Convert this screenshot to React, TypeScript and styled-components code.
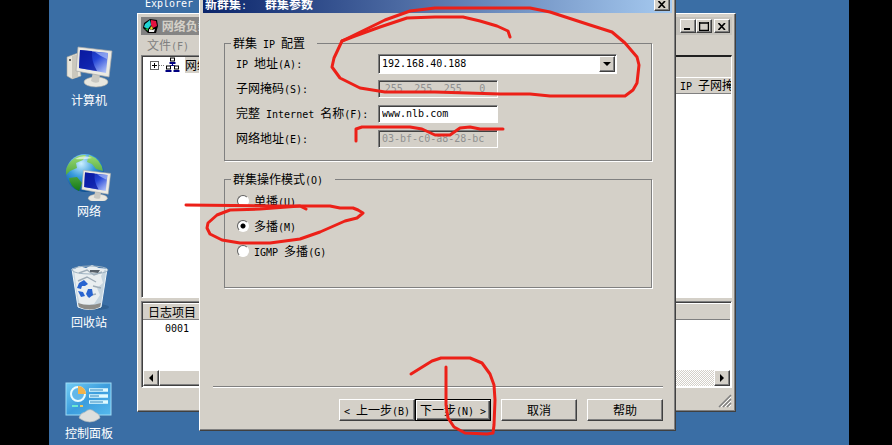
import React from "react";
import styled, { createGlobalStyle, css } from "styled-components";

const face = "#d4d0c8";
const latinFont = `"DejaVu Sans Mono", "Liberation Mono", monospace`;
const hanFont = `"Noto Sans CJK SC", "Noto Sans", sans-serif`;

const GlobalStyle = createGlobalStyle`
  * { box-sizing: border-box; }
  html, body { margin: 0; background: #000; overflow: hidden; }
  body { font: 12px/16px ${hanFont}; color: #000; }
`;

const raised = css`
  border: 1px solid;
  border-color: #fff #404040 #404040 #fff;
  box-shadow: inset -1px -1px 0 #808080;
  background: ${face};
`;

const sunken = css`
  border: 1px solid;
  border-color: #808080 #fff #fff #808080;
  box-shadow: inset 1px 1px 0 #404040;
`;

const Screen = styled.main`
  position: relative;
  height: 100vh;
  padding: 0 43px 0 49px;
  overflow: hidden;
`;

const Desktop = styled.div`
  position: relative;
  height: 100%;
  background: #3a6ea5;
  display: flex;
  align-items: flex-start;
  overflow: hidden;
`;

const IconColumn = styled.nav<{ $raised?: boolean }>`
  width: 80px;
  flex: none;
  display: grid;
  gap: 46px;
  margin-top: ${(p) => (p.$raised ? "-6px" : "43px")};
`;

const Shortcut = styled.a`
  display: grid;
  justify-items: center;
  height: 65px;
  color: #fff;
  text-decoration: none;
  line-height: 16px;
  grid-template-rows: 49px 16px;
`;

const ShortcutCaption = styled.a`
  color: #fff;
  text-align: center;
  text-decoration: none;
`;

const Latin = styled.span`
  font: 10px/12px ${latinFont};
  white-space: pre;
`;

/* Sets half-width runs in the narrow face, so that two of them fill one Han cell. */
const Mixed = ({ children }: { children: string }) => (
  <>
    {children.split(/([\x20-\x7e]+)/).map((run, i) =>
      i % 2 ? <Latin key={i}>{run}</Latin> : run
    )}
  </>
);

const Frame = styled.section`
  position: absolute;
  ${raised}
  padding: 3px;
  display: flex;
  flex-direction: column;
`;

const ManagerFrame = styled(Frame)`
  left: 88px;
  right: 113px;
  top: 13px;
`;

const DialogFrame = styled(Frame)`
  left: 150px;
  right: 173px;
  top: -9px;
`;

const TitleBar = styled.header<{ $active?: boolean }>`
  height: 18px;
  display: flex;
  align-items: center;
  padding: 0 2px;
  color: ${(p) => (p.$active ? "#fff" : face)};
  background: ${(p) =>
    p.$active
      ? "linear-gradient(90deg, #0a246a, #a6caf0)"
      : "linear-gradient(90deg, #808080, #c8c5be)"};
  font-weight: 700;
  white-space: pre;
`;

const TitleText = styled.h1`
  flex: 1;
  margin: 0;
  font: inherit;
`;

const CaptionButtons = styled.div`
  display: flex;
  button:last-child { margin-left: 2px; }
`;

const CaptionButton = styled.button`
  ${raised}
  width: 16px;
  height: 14px;
  padding: 0;
  display: grid;
  place-items: center;
`;

const MenuBar = styled.div`
  height: 20px;
  padding: 1px 6px;
  display: flex;
`;

const MenuButton = styled.button`
  border: 0;
  padding: 0;
  background: none;
  color: #808080;
  font: 12px/16px ${hanFont};
`;

const Panes = styled.div`
  display: grid;
  grid-template-columns: 1fr 1fr;
  height: 243px;
`;

const TreePane = styled.div`
  ${sunken}
  background: #fff;
  padding: 1px 8px;
`;

const TreeRow = styled.div`
  display: flex;
  align-items: center;
  gap: 4px;
  white-space: nowrap;
  overflow: hidden;
  span { background: ${face}; }
`;

const ListPane = styled.div`
  border-top: 2px solid #202020;
  border-right: 1px solid #fff;
  border-bottom: 1px solid #fff;
  background: #fff;
`;

const ListBanner = styled.div`
  height: 20px;
  background: ${face};
`;

const Table = styled.table`
  width: 100%;
  border-collapse: collapse;
  table-layout: fixed;
  th {
    height: 16px;
    padding: 0 0 0 5px;
    text-align: left;
    font-weight: 400;
    line-height: 14px;
    white-space: nowrap;
    overflow: hidden;
    background: ${face};
    border-top: 1px solid #fff;
    border-bottom: 1px solid #808080;
  }
  td { padding: 0 0 0 22px; line-height: 14px; }
`;

const SpacerHead = styled.th`
  width: 81%;
`;

const LogPane = styled.div`
  ${sunken}
  margin-top: 3px;
  padding: 1px;
  background: #fff;
  display: flex;
  flex-direction: column;
  height: 87px;
`;

const ScrollBar = styled.div`
  margin-top: auto;
  display: flex;
  height: 16px;
  background: repeating-conic-gradient(#fff 0 25%, ${face} 0 50%) 0 0 / 2px 2px;
`;

const ScrollButton = styled(CaptionButton)`
  height: 16px;
`;

const ScrollThumb = styled.div`
  ${raised}
  width: 60%;
  margin-right: auto;
`;

const StatusBar = styled.footer`
  height: 20px;
  display: flex;
  justify-content: flex-end;
  align-items: flex-end;
`;

const DialogBody = styled.form`
  padding: 22px 9px 6px 10px;
  display: flex;
  flex-direction: column;
`;

const Group = styled.fieldset`
  margin: 0 11px 10px;
  min-width: 0;
  border: 1px solid #808080;
  box-shadow: 1px 1px 0 #fff;
  padding: 0 0 9px 11px;
`;

const Legend = styled.legend`
  margin-left: -5px;
  padding: 0 12px 0 2px;
  line-height: 16px;
`;

const FieldGrid = styled.div`
  display: grid;
  grid-template-columns: 142px minmax(0, 239px);
  grid-auto-rows: 25px;
  align-items: center;
`;

const FieldLabel = styled.label`
  padding-bottom: 2px;
`;

const Field = styled.input`
  ${sunken}
  width: 120px;
  height: 18px;
  padding: 0 3px;
  border-radius: 0;
  background: #fff;
  color: #000;
  font: 10px/14px ${latinFont};
  &:disabled { background: ${face}; color: #909090; }
`;

const Octets = styled.div`
  ${sunken}
  width: 120px;
  height: 18px;
  display: grid;
  grid-template-columns: repeat(4, 1fr);
`;

const Octet = styled.input`
  min-width: 0;
  border: 0;
  padding: 0;
  background: none;
  text-align: center;
  color: #909090;
  font: 10px/14px ${latinFont};
`;

const ComboBox = styled.div`
  position: relative;
`;

const Select = styled.select`
  ${sunken}
  appearance: none;
  display: block;
  width: 100%;
  height: 20px;
  padding: 0 20px 0 3px;
  border-radius: 0;
  background: #fff;
  color: #000;
  font: 10px/16px ${latinFont};
`;

const ComboArrow = styled.span`
  ${raised}
  position: absolute;
  right: 2px;
  top: 2px;
  width: 16px;
  height: 16px;
  display: grid;
  place-items: center;
  pointer-events: none;
`;

const RadioList = styled.div`
  display: grid;
  grid-auto-rows: 25px;
  padding: 1px 0 15px;
`;

const RadioLabel = styled.label`
  display: flex;
  align-items: center;
  gap: 5px;
`;

const Radio = styled.input`
  appearance: none;
  margin: 0 0 0 1px;
  width: 12px;
  height: 12px;
  border-radius: 50%;
  border: 1px solid;
  border-color: #606060 #fff #fff #606060;
  background: #fff;
  &:checked { background: radial-gradient(circle, #000 0 2px, #fff 3px); }
`;

const Divider = styled.hr`
  width: 100%;
  height: 2px;
  margin: 88px 0 11px;
  border: 0;
  border-top: 1px solid #808080;
  border-bottom: 1px solid #fff;
`;

const Actions = styled.div`
  display: flex;
  justify-content: flex-end;
  gap: 10px;
`;

const StepPair = styled.div`
  display: flex;
`;

const PushButton = styled.button<{ $default?: boolean }>`
  ${raised}
  width: 76px;
  height: 22px;
  padding: 0;
  font: 12px/16px ${hanFont};
  color: #000;
  white-space: nowrap;
  ${(p) =>
    p.$default &&
    css`
      border-color: #000;
      box-shadow: inset 1px 1px 0 #fff, inset -1px -1px 0 #404040, inset -2px -2px 0 #808080;
    `}
`;

const Ink = styled.svg`
  position: absolute;
  left: 0;
  top: 0;
  pointer-events: none;
  fill: none;
  stroke: #ec2018;
  stroke-width: 3;
  stroke-linecap: round;
  stroke-linejoin: round;
`;

const Cross = () => (
  <svg width="8" height="7" viewBox="0 0 8 7">
    <path d="M0.5 0L7 7M7 0L0.5 7" stroke="#000" strokeWidth="1.6" />
  </svg>
);

const Triangle = ({ to }: { to: "left" | "right" | "down" }) => (
  <svg width="8" height="8" viewBox="0 0 8 8">
    <path d={{ left: "M6 0V8L2 4Z", right: "M2 0V8L6 4Z", down: "M0 2H8L4 6Z" }[to]} />
  </svg>
);

const Monitor = () => (
  <g>
    <ellipse cx="31" cy="39" rx="12" ry="5" fill="#e9e7df" stroke="#aaa9a3" strokeWidth=".6" />
    <path d="M28 29L35 31L34 39Q30 41 26 38Z" fill="#c9c8c2" />
    <path d="M13 4L47 8L44 34L11 28Z" fill="#eceae2" stroke="#a6a8a8" strokeWidth=".7" />
    <path d="M15 7L43 10L41 30L14 25Z" fill="url(#panel)" />
    <path d="M15 7L27 8Q26 18 32 28L14 25Z" fill="#0818a0" opacity=".75" />
    <path d="M30 9L43 10L42 16Q35 13 30 9Z" fill="#a8bcf8" opacity=".7" />
  </g>
);

const ComputerIcon = () => (
  <svg width="48" height="47" viewBox="0 0 48 47">
    <defs>
      <linearGradient id="panel" x1="0" y1="0" x2="1" y2="1">
        <stop offset="0" stopColor="#0c1c98" />
        <stop offset=".5" stopColor="#2647d8" />
        <stop offset="1" stopColor="#c3d2fc" />
      </linearGradient>
    </defs>
    <path d="M2 14L13 10L16 33L7 36L2 33Z" fill="#e8e5da" stroke="#aaa69a" strokeWidth=".6" />
    <path d="M7 13L13 11V34L7 36Z" fill="#cbc8bd" />
    <circle cx="5" cy="17" r="1" fill="#333" />
    <Monitor />
  </svg>
);

const NetworkIcon = () => (
  <svg width="48" height="47" viewBox="0 0 48 47">
    <defs>
      <radialGradient id="sea" cx=".4" cy=".25" r=".8">
        <stop offset="0" stopColor="#cdf0ff" />
        <stop offset=".45" stopColor="#389bdc" />
        <stop offset="1" stopColor="#064487" />
      </radialGradient>
      <linearGradient id="land" x1="0" y1="0" x2="0" y2="1">
        <stop offset="0" stopColor="#9bdc72" />
        <stop offset="1" stopColor="#137a16" />
      </linearGradient>
    </defs>
    <circle cx="20" cy="19" r="19" fill="url(#sea)" />
    <path d="M6 7Q13 0 21 1L18 6L11 9L12 14L5 17L1 21Q0 13 6 7ZM24 1Q36 5 38 17L31 15L27 10L22 8ZM4 24L12 23L17 29L14 37Q5 33 4 24Z" fill="url(#land)" />
    <path d="M10 5Q18 0 27 4Q18 6 10 5Z" fill="#fff" opacity=".6" />
    <g transform="translate(8 13) scale(.8 .8)"><Monitor /></g>
  </svg>
);

const BinIcon = () => (
  <svg width="48" height="47" viewBox="0 0 48 47">
    <ellipse cx="31" cy="42" rx="13" ry="3" fill="#24517f" opacity=".5" />
    <path d="M7 4L42 4L36 42Q24 47 13 42Z" fill="#c6d5df" stroke="#edf5fa" />
    <path d="M9 5L14 1L21 3L27 0L34 3L40 4L36 11L38 18L32 23L35 30L29 39L15 40L12 27Z" fill="#e9eef0" />
    <path d="M14 8L22 5L29 10L37 7M13 16L22 12L31 17M28 21L36 23M22 31L31 29" fill="none" stroke="#9fadb8" strokeWidth="1.4" />
    <ellipse cx="25" cy="5" rx="18" ry="4" fill="none" stroke="#9fb3c2" />
    <path d="M25 5H35L33 8L25 7Z" fill="#555f68" />
    <path d="M14 18L19 15L23 19L20 21L17 21L16 24L12 23ZM23 24L27 24L28 30L24 33L21 29ZM13 26L18 27L20 31L16 32Z" fill="#2864d0" />
    <path d="M13 38Q24 42 36 38L35 42Q25 47 14 42Z" fill="#8d8c88" />
  </svg>
);

const ControlPanelIcon = () => (
  <svg width="48" height="47" viewBox="0 0 48 47">
    <defs>
      <linearGradient id="board" x1="0" y1="0" x2="1" y2="1">
        <stop offset="0" stopColor="#72cdf5" />
        <stop offset=".5" stopColor="#3c9ddd" />
        <stop offset="1" stopColor="#55b9ee" />
      </linearGradient>
    </defs>
    <rect x="1" y="7" width="45" height="32" fill="url(#board)" stroke="#9edcf6" />
    <circle cx="13" cy="18" r="7" fill="#61b7e9" stroke="#e8fbff" strokeWidth="2" />
    <path d="M13 18V10A8 8 0 0 1 21 18Z" fill="#f2b34b" />
    <path d="M24 14H43M24 20H43M24 26H43" stroke="#dffaff" strokeWidth="3.5" />
    <path d="M25 14H38M25 20H34M25 26H38" stroke="#2780bd" strokeWidth="1.2" />
    <path d="M7 30H13" stroke="#6de8d0" strokeWidth="2" />
    <path d="M15 30H18" stroke="#f0c859" strokeWidth="2" />
    <path d="M14 42Q15 37 20 36Q25 31 30 36Q35 38 35 42Q25 50 14 42Z" fill="#dedfdd" stroke="#a6b3ba" strokeWidth=".7" />
  </svg>
);

const ClusterLogo = () => (
  <svg width="16" height="16" viewBox="0 0 16 16">
    <path d="M1 5L7 1L14 2L15 8L13 15L5 15L0 10Z" />
    <path d="M2 6L7 2L8 7L5 11L1 9Z" fill="#20d4d4" />
    <path d="M8 2L13 3L14 8L10 10L8 7Z" fill="#e3123f" />
    <path d="M8 8L10 10L9 12L7 11Z" fill="#e3d72b" />
    <path d="M6 11L9 12L12 11L11 14H6Z" fill="#eee" />
    <path d="M2 11L5 10V13Z" fill="#1faf37" />
  </svg>
);

const ClusterNode = ({ x, y }: { x: number; y: number }) => (
  <g transform={`translate(${x} ${y})`}>
    <rect x="1" width="4" height="3" fill="#fff" stroke="#000" />
    <path d="M0 5H6" stroke="#000080" strokeWidth="2" />
  </g>
);

const TreeIcon = () => (
  <svg width="31" height="16" viewBox="0 0 31 16">
    <rect x=".5" y="4.5" width="8" height="8" fill="#fff" stroke="#666" />
    <path d="M2 8.5H7M4.5 6V11" stroke="#000" />
    <path d="M9 8.5H15" stroke="#777" strokeDasharray="1 1" />
    <path d="M22.5 7V9M18 10L22.5 8L27 10" stroke="#000080" fill="none" />
    <ClusterNode x={19.5} y={1} />
    <ClusterNode x={15.5} y={9} />
    <ClusterNode x={23.5} y={9} />
  </svg>
);

const shortcuts = [
  { name: "计算机", Icon: ComputerIcon },
  { name: "网络", Icon: NetworkIcon },
  { name: "回收站", Icon: BinIcon },
  { name: "控制面板", Icon: ControlPanelIcon },
];

const strokes = [
  "M342 41L355 36L380 27L407 18L435 17H463L480 21L497 26L508 31L510 37",
  "M342 41L385 20L410 11L435 8H530L550 12L590 25L612 32L625 43L637 57L639 65L637 83L633 90L625 96H550L530 94L500 94L435 92L385 92L360 88L340 78L332 67L334 58L342 41",
  "M356 141V129L362 127H410L422 129L435 135H450L460 128L470 127L480 129H503",
  "M186 205L275 206L300 206L306 209",
  "M230 210L260 209L300 206L330 206L340 208L353 208L358 210L363 213L357 218L345 221L320 232L300 239L270 243H240L222 240L210 234L207 228L208 223L217 215L230 210",
  "M411 374L432 361L441 358H470L482 363L490 374L494 385L495 400L494 425L493 433L487 434L465 433L454 427L448 418L446 405V367",
];

const modes = ["单播(U)", "多播(M)", "IGMP 多播(G)"];

const ManagerWindow = () => (
  <ManagerFrame>
    <TitleBar>
      <ClusterLogo />
      <TitleText>&nbsp;网络负载平衡管理器</TitleText>
      <CaptionButtons>
        <CaptionButton aria-label="最小化">
          <svg width="8" height="8"><path d="M0 7H6" stroke="#000" strokeWidth="2" /></svg>
        </CaptionButton>
        <CaptionButton aria-label="最大化">
          <svg width="10" height="9"><path d="M.5 0V8.5H9.5V0M0 1H10" fill="none" stroke="#000" strokeWidth="1.5" /></svg>
        </CaptionButton>
        <CaptionButton aria-label="关闭"><Cross /></CaptionButton>
      </CaptionButtons>
    </TitleBar>
    <MenuBar>
      <MenuButton><Mixed>文件(F)</Mixed></MenuButton>
    </MenuBar>
    <Panes>
      <TreePane>
        <TreeRow><TreeIcon /><span>网络负载平衡群集</span></TreeRow>
      </TreePane>
      <ListPane>
        <ListBanner />
        <Table>
          <thead>
            <tr><SpacerHead /><th><Mixed>IP 子网掩码</Mixed></th></tr>
          </thead>
        </Table>
      </ListPane>
    </Panes>
    <LogPane>
      <Table>
        <thead><tr><th>日志项目</th></tr></thead>
        <tbody><tr><td><Latin>0001</Latin></td></tr></tbody>
      </Table>
      <ScrollBar>
        <ScrollButton aria-label="向左滚动"><Triangle to="left" /></ScrollButton>
        <ScrollThumb />
        <ScrollButton aria-label="向右滚动"><Triangle to="right" /></ScrollButton>
      </ScrollBar>
    </LogPane>
    <StatusBar>
      <svg width="14" height="14">
        <path d="M1 13L13 1M5 13L13 5M9 13L13 9" stroke="#808080" strokeWidth="1.5" />
        <path d="M3 13L13 3M7 13L13 7M11 13L13 11" stroke="#fff" />
      </svg>
    </StatusBar>
  </ManagerFrame>
);

const ClusterDialog = () => (
  <DialogFrame role="dialog" aria-label="新群集">
    <TitleBar $active>
      <TitleText><Mixed>新群集:   群集参数</Mixed></TitleText>
      <CaptionButton aria-label="关闭"><Cross /></CaptionButton>
    </TitleBar>
    <DialogBody onSubmit={(e) => e.preventDefault()}>
      <Group>
        <Legend><Mixed>群集 IP 配置</Mixed></Legend>
        <FieldGrid>
          <FieldLabel htmlFor="ip"><Mixed>IP 地址(A):</Mixed></FieldLabel>
          <ComboBox>
            <Select id="ip"><option>192.168.40.188</option></Select>
            <ComboArrow><Triangle to="down" /></ComboArrow>
          </ComboBox>
          <FieldLabel htmlFor="mask-0"><Mixed>子网掩码(S):</Mixed></FieldLabel>
          <Octets>
            {["255", "255", "255", "0"].map((part, i) => (
              <Octet key={i} id={`mask-${i}`} aria-label={`子网掩码 ${i + 1}`} defaultValue={part} disabled />
            ))}
          </Octets>
          <FieldLabel htmlFor="name"><Mixed>完整 Internet 名称(F):</Mixed></FieldLabel>
          <Field id="name" defaultValue="www.nlb.com" />
          <FieldLabel htmlFor="mac"><Mixed>网络地址(E):</Mixed></FieldLabel>
          <Field id="mac" defaultValue="03-bf-c0-a8-28-bc" disabled />
        </FieldGrid>
      </Group>
      <Group>
        <Legend><Mixed>群集操作模式(O)</Mixed></Legend>
        <RadioList>
          {modes.map((mode, i) => (
            <RadioLabel key={mode}>
              <Radio type="radio" name="mode" defaultChecked={i === 1} />
              <span><Mixed>{mode}</Mixed></span>
            </RadioLabel>
          ))}
        </RadioList>
      </Group>
      <Divider />
      <Actions>
        <StepPair>
          <PushButton type="button"><Mixed>{"< 上一步(B)"}</Mixed></PushButton>
          <PushButton type="submit" $default><Mixed>{"下一步(N) >"}</Mixed></PushButton>
        </StepPair>
        <PushButton type="button">取消</PushButton>
        <PushButton type="button">帮助</PushButton>
      </Actions>
    </DialogBody>
  </DialogFrame>
);

export default function App() {
  return (
    <>
      <GlobalStyle />
      <Screen>
        <Desktop>
          <IconColumn>
            {shortcuts.map(({ name, Icon }) => (
              <Shortcut key={name} href="#"><Icon />{name}</Shortcut>
            ))}
          </IconColumn>
          <IconColumn $raised>
            <ShortcutCaption href="#"><Latin>Explorer</Latin></ShortcutCaption>
          </IconColumn>
          <ManagerWindow />
          <ClusterDialog />
        </Desktop>
        <Ink width="892" height="445" viewBox="0 0 892 445" aria-hidden="true">
          {strokes.map((d) => <path key={d} d={d} />)}
        </Ink>
      </Screen>
    </>
  );
}
